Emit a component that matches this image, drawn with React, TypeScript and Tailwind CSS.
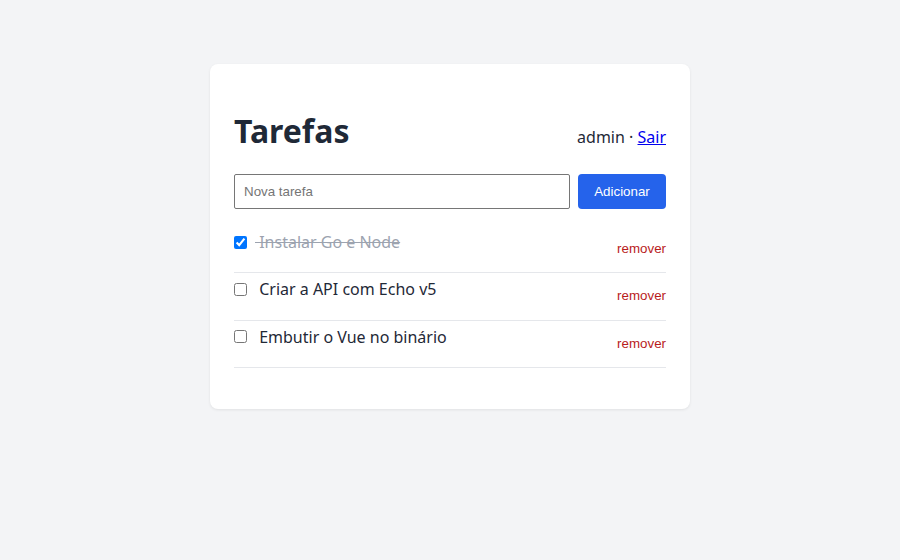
const tasks = [
  { id: 1, title: "Instalar Go e Node", done: true },
  { id: 2, title: "Criar a API com Echo v5", done: false },
  { id: 3, title: "Embutir o Vue no binário", done: false },
];

export default function App() {
  return (
    <div className="min-h-screen bg-[#f3f4f6] pt-16 font-['Noto_Sans',sans-serif] text-[#1f2937]">
      <div className="mx-auto w-[480px] rounded-lg bg-white px-6 pt-6 pb-[41px] shadow-[0_1px_3px_rgba(0,0,0,0.08)]">
        <header className="mt-6 flex items-baseline justify-between">
          <h1 className="text-[32px] leading-[38px] font-bold">Tarefas</h1>
          <span className="text-base">
            admin · <a href="#" className="text-[#0000ee] underline">Sair</a>
          </span>
        </header>

        <form className="mt-6 flex gap-2" onSubmit={(e) => e.preventDefault()}>
          <input
            className="h-[35px] flex-1 rounded-[2px] border border-[#767676] px-[9px] font-['Liberation_Sans',Arial,sans-serif] text-[13.33px] placeholder:text-[#757575]"
            placeholder="Nova tarefa"
          />
          <button className="h-[35px] w-[88px] rounded bg-[#2563eb] font-['Liberation_Sans',Arial,sans-serif] text-[13.33px] text-white">
            Adicionar
          </button>
        </form>

        <ul className="mt-[17px]">
          {tasks.map((t) => (
            <li key={t.id} className="flex items-start justify-between border-b border-[#e5e7eb] pt-[4px] pb-[13.5px]">
              <label className="flex items-center">
                <input type="checkbox" defaultChecked={t.done} className="h-[13px] w-[13px]" />
                <span className={t.done ? "ml-2 text-[#9ca3af] line-through" : "ml-2"}>{"\u00a0" + t.title}</span>
              </label>
              <button className="mt-[9px] font-['Liberation_Sans',Arial,sans-serif] text-[13.33px] text-[#b91c1c]">
                remover
              </button>
            </li>
          ))}
        </ul>
      </div>
    </div>
  );
}
